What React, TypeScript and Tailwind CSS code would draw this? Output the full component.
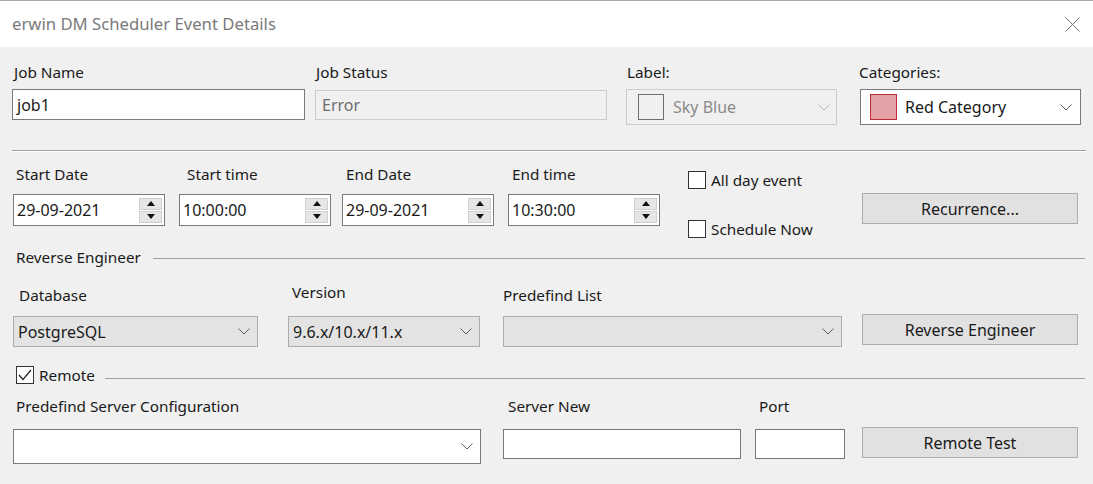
import React from "react";

const Chevron = ({ color = "#606060" }: { color?: string }) => (
  <svg width="12" height="7" viewBox="0 0 12 7" className="shrink-0">
    <polyline points="0.5,0.5 6,6 11.5,0.5" fill="none" stroke={color} strokeWidth="1" />
  </svg>
);

const SpinButton = ({ up }: { up?: boolean }) => (
  <div className="w-[23px] h-[12px] bg-[#e6e6e6] border border-[#cfcfcf] flex items-center justify-center">
    <svg width="8" height="5" viewBox="0 0 8 5">
      {up ? <polygon points="4,0 8,5 0,5" fill="#111" /> : <polygon points="0,0 8,0 4,5" fill="#111" />}
    </svg>
  </div>
);

const Spinner = () => (
  <div className="flex flex-col gap-[1px] mr-[2px]">
    <SpinButton up />
    <SpinButton />
  </div>
);

const Checkbox = ({ checked }: { checked?: boolean }) => (
  <div className="w-[18px] h-[18px] border border-[#333333] bg-white flex items-center justify-center shrink-0">
    {checked && (
      <svg width="14" height="12" viewBox="0 0 14 12">
        <polyline points="1,6 5,10.5 13,1" fill="none" stroke="#222" strokeWidth="1.2" />
      </svg>
    )}
  </div>
);

const DateField = ({ label, value, ml, lpad }: { label: string; value: string; ml: string; lpad: string }) => (
  <div className={`flex flex-col w-[152px] ${ml}`}>
    <div className={`h-[20px] leading-[20px] ${lpad}`}>{label}</div>
    <div className="mt-[10px] h-[32px] border border-[#7a7a7a] bg-white flex items-center pl-[3px] text-[16px]">
      <span className="flex-1">{value}</span>
      <Spinner />
    </div>
  </div>
);

const Button = ({ text }: { text: string }) => (
  <div className="w-[216px] h-[31px] bg-[#e1e1e1] border border-[#adadad] flex items-center justify-center text-[16px]">
    {text}
  </div>
);

export default function App() {
  return (
    <div className="w-[1093px] h-[484px] bg-[#f0f0f0] border-t border-[#a6a6a6] overflow-hidden font-['Noto_Sans',sans-serif] text-[15.3px] text-[#1a1a1a]">
      {/* title bar */}
      <div className="h-[46px] bg-white flex items-center justify-between pl-[12px] pr-[13px]">
        <span className="text-[16.7px] text-[#7a7a7a]">erwin DM Scheduler Event Details</span>
        <svg width="15" height="15" viewBox="0 0 15 15">
          <path d="M0.5 0.5 L14.5 14.5 M14.5 0.5 L0.5 14.5" stroke="#707070" strokeWidth="1" />
        </svg>
      </div>

      {/* row 1 */}
      <div className="flex items-start mt-[15px]">
        <div className="flex flex-col w-[293px] ml-[12px]">
          <div className="h-[20px] leading-[20px] pl-[2px]">Job Name</div>
          <div className="mt-[7px] h-[31px] border border-[#7a7a7a] bg-white flex items-center pl-[4px] text-[16px]">job1</div>
        </div>
        <div className="flex flex-col w-[292px] ml-[10px]">
          <div className="h-[20px] leading-[20px] pl-[1px]">Job Status</div>
          <div className="mt-[8px] h-[30px] border border-[#cccccc] bg-[#f0f0f0] flex items-center pl-[6px] text-[16px] text-[#6d6d6d]">Error</div>
        </div>
        <div className="flex flex-col w-[211px] ml-[19px]">
          <div className="h-[20px] leading-[20px] pl-[1px]">Label:</div>
          <div className="mt-[7px] h-[36px] border border-[#cccccc] bg-[#f0f0f0] flex items-center pl-[11px] pr-[6px] text-[16px] text-[#8a8a8a]">
            <div className="w-[26px] h-[26px] border border-[#6d6d6d]" />
            <span className="ml-[9px] flex-1">Sky Blue</span>
            <Chevron color="#b5b5b5" />
          </div>
        </div>
        <div className="flex flex-col w-[221px] ml-[23px]">
          <div className="h-[20px] leading-[20px] -ml-[1px]">Categories:</div>
          <div className="mt-[7px] h-[36px] border border-[#7a7a7a] bg-white flex items-center pl-[9px] pr-[8px] text-[16px]">
            <div className="w-[27px] h-[26px] bg-[#e2a1a4] border border-[#c0283a]" />
            <span className="ml-[8px] flex-1">Red Category</span>
            <Chevron />
          </div>
        </div>
      </div>

      {/* separator */}
      <div className="mt-[25px] ml-[12px] w-[1074px] h-[2px] border-t border-[#a0a0a0] border-b border-b-white" />

      {/* row 2 */}
      <div className="flex items-start mt-[12px] h-[73px] pr-[15px]">
        <DateField label="Start Date" value="29-09-2021" ml="ml-[13px]" lpad="pl-[3px]" />
        <DateField label="Start time" value="10:00:00" ml="ml-[14px]" lpad="pl-[8px]" />
        <DateField label="End Date" value="29-09-2021" ml="ml-[11px]" lpad="pl-[4px]" />
        <DateField label="End time" value="10:30:00" ml="ml-[14px]" lpad="pl-[4px]" />
        <div className="flex flex-col ml-[28px] mt-[7px] gap-[31px]">
          <div className="flex items-center h-[18px]">
            <Checkbox />
            <span className="ml-[5px]">All day event</span>
          </div>
          <div className="flex items-center h-[18px]">
            <Checkbox />
            <span className="ml-[5px]">Schedule Now</span>
          </div>
        </div>
        <div className="ml-auto mt-[29px]">
          <Button text="Recurrence..." />
        </div>
      </div>

      {/* reverse engineer group */}
      <div className="flex items-center h-[20px] mt-[10px]">
        <span className="pl-[16px]">Reverse Engineer</span>
        <div className="flex-1 h-px bg-[#a0a0a0] ml-[12px] mr-[8px] mt-[3px]" />
      </div>

      {/* row 3 */}
      <div className="flex items-start mt-[15px] pr-[15px]">
        <div className="flex flex-col w-[245px] ml-[13px]">
          <div className="h-[34px] pt-[3px] pl-[6px] leading-[20px]">Database</div>
          <div className="h-[31px] border border-[#adadad] bg-[#e3e3e3] flex items-center pl-[4px] pr-[7px] text-[16px]">
            <span className="flex-1">PostgreSQL</span>
            <Chevron />
          </div>
        </div>
        <div className="flex flex-col w-[192px] ml-[30px]">
          <div className="h-[34px] pl-[4px] leading-[20px]">Version</div>
          <div className="h-[31px] border border-[#adadad] bg-[#e3e3e3] flex items-center pl-[4px] pr-[7px] text-[16px]">
            <span className="flex-1">9.6.x/10.x/11.x</span>
            <Chevron />
          </div>
        </div>
        <div className="flex flex-col w-[339px] ml-[23px]">
          <div className="h-[34px] pt-[3px] leading-[20px]">Predefind List</div>
          <div className="h-[31px] border border-[#adadad] bg-[#e3e3e3] flex items-center justify-end pr-[7px]">
            <Chevron />
          </div>
        </div>
        <div className="ml-auto mt-[32px]">
          <Button text="Reverse Engineer" />
        </div>
      </div>

      {/* remote */}
      <div className="flex items-start h-[18px] mt-[19px]">
        <div className="ml-[16px]">
          <Checkbox checked />
        </div>
        <span className="ml-[5px] leading-[18px]">Remote</span>
        <div className="flex-1 h-px bg-[#a0a0a0] ml-[10px] mr-[8px] mt-[12px]" />
      </div>

      {/* row 4 */}
      <div className="flex items-start mt-[12px] pr-[15px]">
        <div className="flex flex-col w-[468px] ml-[13px]">
          <div className="h-[20px] leading-[20px] pl-[3px]">Predefind Server Configuration</div>
          <div className="mt-[13px] h-[35px] border border-[#7a7a7a] bg-white flex items-center justify-end pr-[7px]">
            <Chevron />
          </div>
        </div>
        <div className="flex flex-col w-[238px] ml-[22px]">
          <div className="h-[20px] leading-[20px] pl-[5px]">Server New</div>
          <div className="mt-[13px] h-[30px] border border-[#7a7a7a] bg-white" />
        </div>
        <div className="flex flex-col w-[90px] ml-[14px]">
          <div className="h-[20px] leading-[20px] pl-[4px]">Port</div>
          <div className="mt-[13px] h-[30px] border border-[#7a7a7a] bg-white" />
        </div>
        <div className="ml-auto mt-[31px]">
          <Button text="Remote Test" />
        </div>
      </div>
    </div>
  );
}
